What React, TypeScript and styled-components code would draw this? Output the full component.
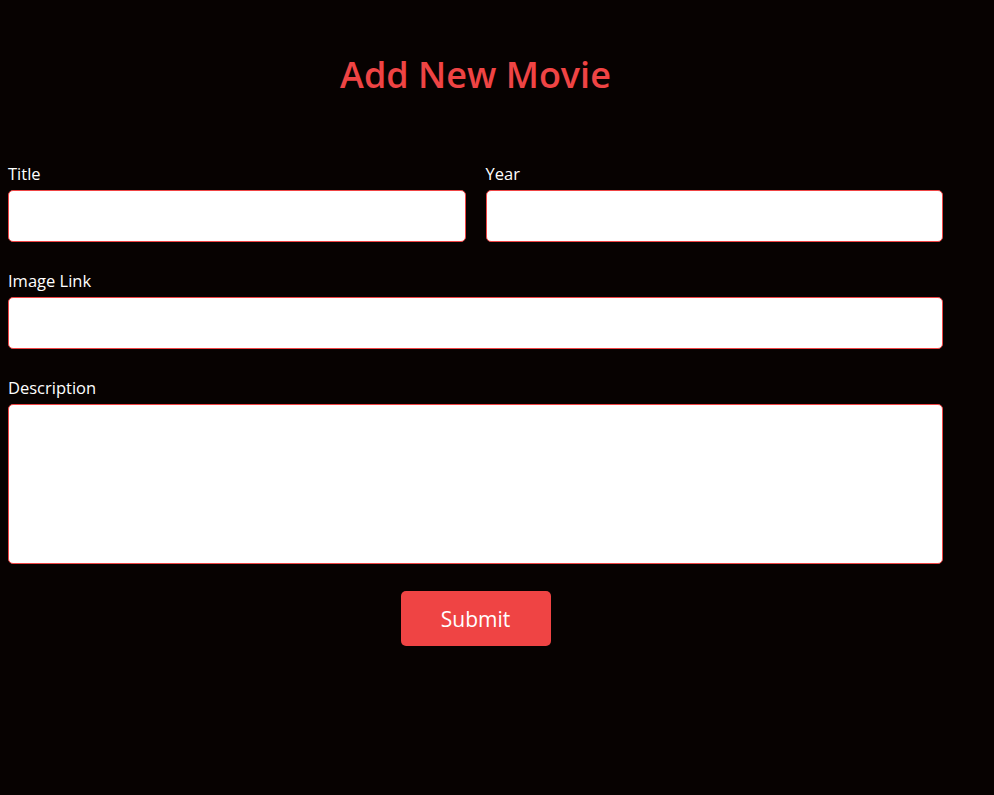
import styled, { createGlobalStyle } from 'styled-components';

const GlobalStyle = createGlobalStyle`
  html, body {
    margin: 0;
    background-color: #070201;
  }

  body {
    padding: 8px;
    font-family: 'Open Sans', 'Noto Sans', sans-serif;
    color: #ffffff;
  }

  * {
    box-sizing: border-box;
  }
`;

const StyledPage = styled.main`
  width: 935px;
  padding-top: 47px;
`;

const StyledHeading = styled.h1`
  margin: 0 0 67px;
  text-align: center;
  font-size: 36px;
  line-height: 40px;
  font-weight: 600;
  color: #ef4444;
`;

const StyledForm = styled.form`
  display: flex;
  flex-direction: column;
  gap: 27px;
`;

const StyledRow = styled.div`
  display: grid;
  grid-template-columns: 1fr 1fr;
  gap: 20px;
`;

const StyledField = styled.label`
  display: flex;
  flex-direction: column;
  gap: 4px;

  > span {
    font-size: 16.5px;
    line-height: 24px;
    color: #ffffff;
  }
`;

const StyledInput = styled.input`
  width: 100%;
  height: 52px;
  border: 1px solid #ef4444;
  border-radius: 5px;
  background-color: #ffffff;
  padding: 0 12px;
  font: inherit;
  outline: none;
`;

const StyledTextarea = styled.textarea`
  width: 100%;
  height: 160px;
  border: 1px solid #ef4444;
  border-radius: 5px;
  background-color: #ffffff;
  padding: 12px;
  font: inherit;
  resize: none;
  outline: none;
  display: block;
`;

const StyledActions = styled.div`
  display: flex;
  justify-content: center;
`;

const StyledButton = styled.button`
  width: 150px;
  height: 55px;
  border: none;
  border-radius: 5px;
  background-color: #ef4444;
  color: #ffffff;
  font-family: inherit;
  font-size: 21px;
  cursor: pointer;
`;

const App = () => {
  return (
    <>
      <GlobalStyle />
      <StyledPage>
        <StyledHeading>Add New Movie</StyledHeading>

        <StyledForm onSubmit={(e) => e.preventDefault()}>
          <StyledRow>
            <StyledField>
              <span>Title</span>
              <StyledInput type="text" />
            </StyledField>
            <StyledField>
              <span>Year</span>
              <StyledInput type="text" />
            </StyledField>
          </StyledRow>

          <StyledField>
            <span>Image Link</span>
            <StyledInput type="text" />
          </StyledField>

          <StyledField>
            <span>Description</span>
            <StyledTextarea />
          </StyledField>

          <StyledActions>
            <StyledButton type="submit">Submit</StyledButton>
          </StyledActions>
        </StyledForm>
      </StyledPage>
    </>
  );
};

export default App;
